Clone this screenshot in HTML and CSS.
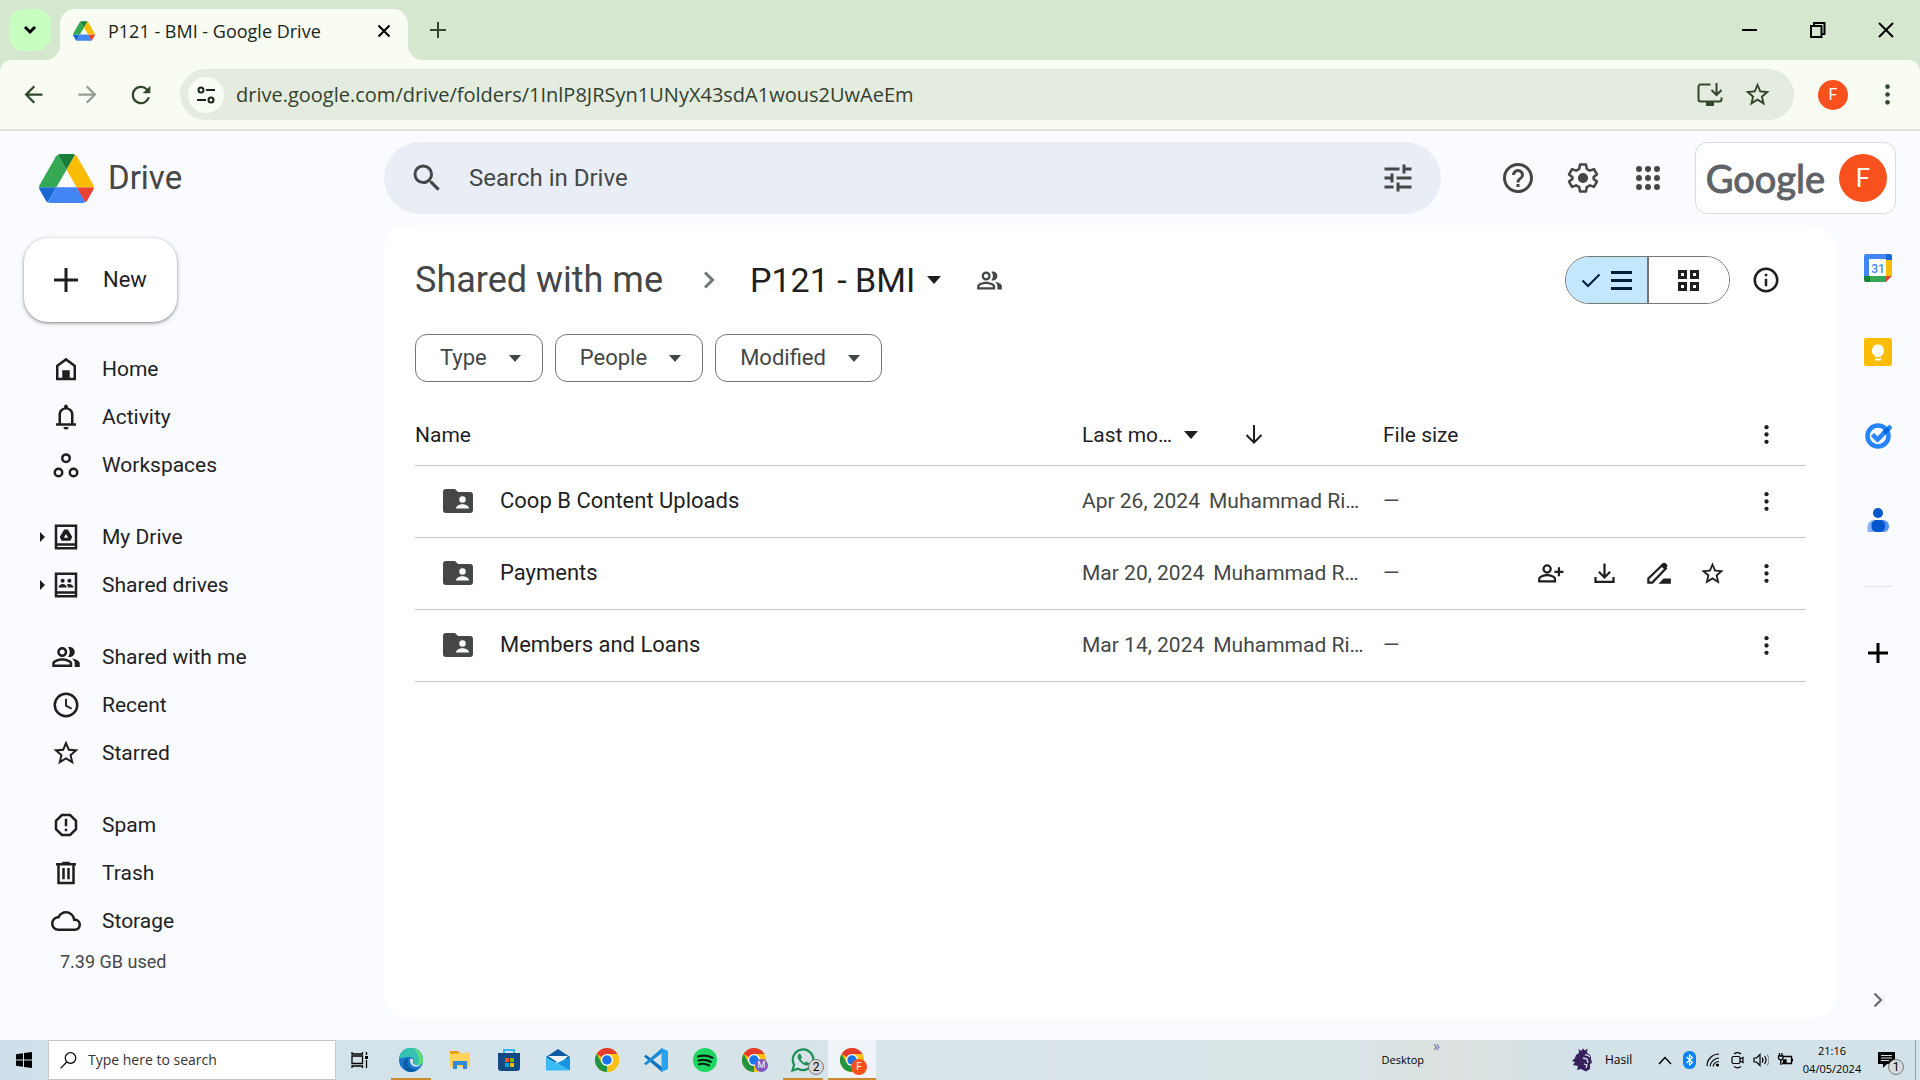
FILE: index.html
```html
<!DOCTYPE html>
<html lang="en">
<head>
<meta charset="utf-8">
<title>P121 - BMI - Google Drive</title>
<link rel="stylesheet" href="styles.css">
</head>
<body>
<svg class="sprite" aria-hidden="true">
  <symbol id="i-drive" viewBox="0 0 87.3 78">
    <path fill="#1967d2" d="m6.6 66.85 3.85 6.65c.8 1.4 1.95 2.5 3.3 3.3l13.75-23.8h-27.5c0 1.55.4 3.1 1.2 4.5z"/>
    <path fill="#34a853" d="m43.65 25-13.75-23.8c-1.35.8-2.5 1.9-3.3 3.3l-25.4 44a9.06 9.06 0 0 0 -1.2 4.5h27.5z"/>
    <path fill="#ea4335" d="m73.55 76.8c1.35-.8 2.5-1.9 3.3-3.3l1.6-2.75 7.65-13.25c.8-1.4 1.2-2.95 1.2-4.5h-27.502l5.852 11.5z"/>
    <path fill="#188038" d="m43.65 25 13.75-23.8c-1.35-.8-2.9-1.2-4.5-1.2h-18.5c-1.6 0-3.15.45-4.5 1.2z"/>
    <path fill="#4285f4" d="m59.8 53h-32.3l-13.75 23.8c1.35.8 2.9 1.2 4.5 1.2h50.8c1.6 0 3.15-.45 4.5-1.2z"/>
    <path fill="#fbbc04" d="m73.4 26.5-12.7-22c-.8-1.4-1.95-2.5-3.3-3.3l-13.75 23.8 16.15 28h27.45c0-1.55-.4-3.1-1.2-4.5z"/>
  </symbol>
  <symbol id="i-kebab" viewBox="0 0 24 24"><circle cx="12" cy="5.5" r="1.9"/><circle cx="12" cy="12" r="1.9"/><circle cx="12" cy="18.5" r="1.9"/></symbol>
  <symbol id="i-star" viewBox="0 0 24 24"><path d="M22 9.24l-7.19-.62L12 2 9.19 8.63 2 9.24l5.46 4.73L5.82 21 12 17.27 18.18 21l-1.63-7.03L22 9.24zM12 15.4l-3.76 2.27 1-4.28-3.32-2.88 4.38-.38L12 6.1l1.71 4.04 4.38.38-3.32 2.88 1 4.28L12 15.4z"/></symbol>
  <symbol id="i-caret" viewBox="0 0 14 8"><path d="M0 0h14L7 8z"/></symbol>
  <symbol id="i-people" viewBox="0 0 24 24"><path d="M16.67 13.13C18.04 14.06 19 15.32 19 17v3h4v-3c0-2.18-3.57-3.47-6.33-3.87zM15 12c2.21 0 4-1.79 4-4s-1.79-4-4-4c-.47 0-.91.1-1.33.24C14.5 5.27 15 6.58 15 8s-.5 2.73-1.33 3.76c.42.14.86.24 1.33.24zM9 12c2.21 0 4-1.79 4-4s-1.79-4-4-4-4 1.79-4 4 1.79 4 4 4zm0-6c1.1 0 2 .9 2 2s-.9 2-2 2-2-.9-2-2 .9-2 2-2zm0 7c-2.67 0-8 1.34-8 4v3h16v-3c0-2.66-5.33-4-8-4zm6 5H3v-.99C3.2 16.29 6.3 15 9 15s5.8 1.29 6 2v1z"/></symbol>
  <symbol id="i-search" viewBox="0 0 24 24"><path d="M15.5 14h-.79l-.28-.27A6.47 6.47 0 0 0 16 9.500 6.500 6.500 0 1 0 9.500 16c1.610 0 3.090-.59 4.230-1.570l.27.28v.79l5 4.990L20.490 19l-4.990-5zm-6 0C7.010 14 5 11.990 5 9.500S7.010 5 9.500 5 14 7.010 14 9.500 11.990 14 9.500 14z"/></symbol>
  <symbol id="i-folder" viewBox="0 0 30 24"><path d="M3 0h9l3 3h12a3 3 0 0 1 3 3v15a3 3 0 0 1-3 3H3a3 3 0 0 1-3-3V3a3 3 0 0 1 3-3z"/><circle cx="19.500" cy="10.500" r="3.200" fill="#fff"/><path fill="#fff" d="M13 19.500c0-2.800 4-4.200 6.500-4.200s6.500 1.400 6.500 4.200z"/></symbol>
  <symbol id="i-chrome" viewBox="0 0 48 48">
    <circle cx="24" cy="24" r="24" fill="#fbc116"/>
    <path fill="#e33b2e" d="M24 24 3.200 12A24 24 0 0 1 44.800 12z"/>
    <path fill="#229342" d="M3.200 12A24 24 0 0 0 24 48l10.400-18L24 24 13.600 30z"/>
    <path fill="#fbc116" d="M24 48a24 24 0 0 0 20.800-36H24z"/>
    <circle cx="24" cy="24" r="12" fill="#fff"/><circle cx="24" cy="24" r="9.500" fill="#1a73e8"/>
  </symbol>
</svg>

<header class="tabstrip">
  <button class="tab-search" aria-label="Search tabs"><svg width="18" height="18" viewBox="0 0 18 18" class="stroke heavy"><path d="M4 6l5 5 5-5"/></svg></button>
  <div class="tab">
    <svg width="22" height="20"><use href="#i-drive"/></svg>
    <span class="tab-title">P121 - BMI - Google Drive</span>
    <button class="plain tab-close" aria-label="Close tab"><svg width="14" height="14" viewBox="0 0 14 14" class="stroke"><path d="M1.500 1.500l11 11M12.500 1.500l-11 11"/></svg></button>
  </div>
  <button class="plain tab-new" aria-label="New tab"><svg width="18" height="18" viewBox="0 0 18 18" class="stroke"><path d="M9 1v16M1 9h16"/></svg></button>
  <div class="window-controls">
    <button class="plain" aria-label="Minimize"><svg width="16" height="16" viewBox="0 0 16 16"><path d="M0 7h15v2H0z"/></svg></button>
    <button class="plain" aria-label="Restore"><svg width="16" height="16" viewBox="0 0 16 16" class="stroke"><path d="M1 4h10.500v11H1zM4 4V1h10.500v11h-3"/></svg></button>
    <button class="plain" aria-label="Close"><svg width="16" height="16" viewBox="0 0 16 16" class="stroke"><path d="M1 1l14 14M15 1L1 15"/></svg></button>
  </div>
</header>

<div class="toolbar-wrap">
<div class="toolbar">
  <div class="nav-buttons">
    <button class="plain" aria-label="Back"><svg width="27" height="27" viewBox="0 0 24 24"><path d="M20 11H7.830l5.590-5.590L12 4l-8 8 8 8 1.410-1.410L7.830 13H20v-2z"/></svg></button>
    <button class="plain faded" aria-label="Forward"><svg width="27" height="27" viewBox="0 0 24 24"><path d="M12 4l-1.410 1.410L16.170 11H4v2h12.170l-5.580 5.590L12 20l8-8z"/></svg></button>
    <button class="plain" aria-label="Reload"><svg width="28" height="28" viewBox="0 0 24 24"><path d="M17.650 6.350A7.960 7.960 0 0 0 12 4a8 8 0 1 0 7.730 10h-2.080A6 6 0 1 1 12 6c1.660 0 3.140.69 4.220 1.780L13.500 10.500H20V4z"/></svg></button>
  </div>
  <div class="omnibox">
    <button class="site-info" aria-label="Site information"><svg width="20" height="20" viewBox="0 0 20 20" class="stroke"><circle cx="5" cy="5" r="2.500"/><path d="M10 5h9M1 15h9"/><circle cx="15" cy="15" r="2.500"/></svg></button>
    <input class="url" type="text" aria-label="Address" value="drive.google.com/drive/folders/1InlP8JRSyn1UNyX43sdA1wous2UwAeEm">
    <button class="plain" aria-label="Install Google Drive"><svg width="27" height="27" viewBox="0 0 27 27" class="stroke"><path d="M14.500 3.500H4.500a2 2 0 0 0-2 2v13a2 2 0 0 0 2 2h19a2 2 0 0 0 2-2v-2M20.500 2v12M15.500 9l5 5 5-5"/><path d="M10 23h8" stroke-width="4"/></svg></button>
    <button class="plain" aria-label="Bookmark this tab"><svg width="29" height="29"><use href="#i-star"/></svg></button>
  </div>
  <button class="avatar avatar-small" aria-label="Profile">F</button>
  <button class="plain" aria-label="Browser menu"><svg width="29" height="29"><use href="#i-kebab"/></svg></button>
</div>
</div>

<div class="app">
  <header class="app-header">
    <a class="brand" href="#"><svg width="55" height="49"><use href="#i-drive"/></svg><span>Drive</span></a>
    <form class="search">
      <svg width="36" height="36"><use href="#i-search"/></svg>
      <input type="search" placeholder="Search in Drive" aria-label="Search in Drive">
      <button type="button" class="plain" aria-label="Advanced search"><svg width="36" height="36" viewBox="0 0 24 24"><path d="M3 17v2h6v-2H3zM3 5v2h10V5H3zm10 16v-2h8v-2h-8v-2h-2v6h2zM7 9v2H3v2h4v2h2V9H7zm14 4v-2H11v2h10zm-6-4h2V7h4V5h-4V3h-2v6z"/></svg></button>
    </form>
    <div class="header-actions">
      <button class="plain" aria-label="Support"><svg width="36" height="36" viewBox="0 0 24 24"><path d="M11 18h2v-2h-2v2zm1-16C6.480 2 2 6.480 2 12s4.480 10 10 10 10-4.480 10-10S17.520 2 12 2zm0 18c-4.410 0-8-3.590-8-8s3.590-8 8-8 8 3.590 8 8-3.590 8-8 8zm0-14a4 4 0 0 0-4 4h2c0-1.100.9-2 2-2s2 .9 2 2c0 2-3 1.750-3 5h2c0-2.250 3-2.500 3-5a4 4 0 0 0-4-4z"/></svg></button>
      <button class="plain" aria-label="Settings"><svg width="36" height="36" viewBox="0 0 24 24"><path fill="none" stroke="currentColor" stroke-width="1.700" stroke-linejoin="round" d="M10 3h4l.5 2.900 2.100 1.200 2.700-1 2 3.500-2.200 1.800v1.200l2.200 1.800-2 3.500-2.700-1-2.100 1.200L14 21h-4l-.5-2.900-2.100-1.200-2.700 1-2-3.500 2.200-1.800v-1.200L2.700 9.600l2-3.500 2.700 1 2.100-1.200z"/><circle cx="12" cy="12" r="3.400"/></svg></button>
      <button class="plain" aria-label="Google apps"><svg width="36" height="36" viewBox="0 0 24 24"><path stroke="currentColor" stroke-width="4" stroke-linecap="round" d="M6 6h0M12 6h0M18 6h0M6 12h0M12 12h0M18 12h0M6 18h0M12 18h0M18 18h0"/></svg></button>
      <div class="account"><span class="wordmark">Google</span><button class="avatar" aria-label="Google Account">F</button></div>
    </div>
  </header>

  <div class="body">
    <nav class="sidebar">
      <button class="new"><svg width="24" height="24" viewBox="0 0 24 24"><path d="M10.500 0h3v10.500H24v3H13.500V24h-3V13.500H0v-3h10.500z"/></svg>New</button>
      <ul>
        <li><a href="#"><svg class="ico" viewBox="0 0 24 24"><path fill-rule="evenodd" d="M4 21V9l8-6 8 6v12zM6 19V10l6-4.500 6 4.500v9h-3v-6H9v6z"/></svg>Home</a></li>
        <li><a href="#"><svg class="ico" viewBox="0 0 24 24"><path fill-rule="evenodd" d="M4 19v-2h2v-7c0-2.800 1.600-5 4.500-5.700V3.500a1.500 1.500 0 0 1 3 0v.8C16.400 5 18 7.200 18 10v7h2v2zM8 17h8v-7a4 4 0 0 0-8 0zM12 22a2 2 0 0 1-2-2h4a2 2 0 0 1-2 2z"/></svg>Activity</a></li>
        <li><a href="#"><svg class="ico stroke" viewBox="0 0 24 24"><circle cx="12" cy="6.500" r="3"/><circle cx="6" cy="18" r="3"/><circle cx="18" cy="18" r="3"/></svg>Workspaces</a></li>
      </ul>
      <ul>
        <li><a href="#" class="expandable"><svg class="twist" width="5" height="10" viewBox="0 0 5 10"><path d="M0 0l5 5-5 5z"/></svg><svg class="ico" viewBox="0 0 24 24"><path fill="none" stroke="currentColor" stroke-width="2" d="M4 3h16v18H4zM4 18h16"/><path fill-rule="evenodd" d="M10.500 6h3l3.500 6-1.500 3h-7L7 12zM12 9.500l-1.700 3h3.400z"/></svg>My Drive</a></li>
        <li><a href="#" class="expandable"><svg class="twist" width="5" height="10" viewBox="0 0 5 10"><path d="M0 0l5 5-5 5z"/></svg><svg class="ico" viewBox="0 0 24 24"><path fill="none" stroke="currentColor" stroke-width="2" d="M4 3h16v18H4zM4 18h16"/><circle cx="9.300" cy="8.500" r="1.600"/><circle cx="14.700" cy="8.500" r="1.600"/><path d="M6 14c0-1.800 1.600-2.800 3.300-2.800s3.300 1 3.300 2.800zM13.500 14c0-1.100-.3-1.900-.9-2.500 2.400-.9 5.400.2 5.400 2.500z"/></svg>Shared drives</a></li>
      </ul>
      <ul>
        <li><a href="#"><svg class="ico"><use href="#i-people"/></svg>Shared with me</a></li>
        <li><a href="#"><svg class="ico stroke" viewBox="0 0 24 24"><circle cx="12" cy="12" r="9"/><path stroke-width="1.500" d="M12 7v5.500l4.500 2.500"/></svg>Recent</a></li>
        <li><a href="#"><svg class="ico"><use href="#i-star"/></svg>Starred</a></li>
      </ul>
      <ul>
        <li><a href="#"><svg class="ico stroke" viewBox="0 0 24 24"><path d="M8.700 4h6.600L20 8.700v6.600L15.300 20H8.700L4 15.300V8.700zM12 7v6M12 15v2"/></svg>Spam</a></li>
        <li><a href="#"><svg class="ico stroke" viewBox="0 0 24 24"><path d="M4 5h16M9 4h6M6 5v15h12V5M10 8v9M14 8v9"/></svg>Trash</a></li>
        <li><a href="#"><svg class="ico" viewBox="0 0 24 24"><path d="M19.350 10.040A7.490 7.490 0 0 0 12 4C9.110 4 6.600 5.640 5.350 8.040A5.994 5.994 0 0 0 0 14c0 3.310 2.690 6 6 6h13c2.760 0 5-2.240 5-5 0-2.640-2.050-4.780-4.650-4.960zM19 18H6c-2.210 0-4-1.790-4-4 0-2.050 1.530-3.760 3.560-3.970l1.070-.11.5-.95A5.469 5.469 0 0 1 12 6c2.620 0 4.880 1.860 5.390 4.430l.3 1.500 1.530.11A2.980 2.980 0 0 1 22 15c0 1.650-1.350 3-3 3z"/></svg>Storage</a></li>
      </ul>
      <a class="quota" href="#">7.39 GB used</a>
    </nav>

    <main class="panel">
      <div class="title-row">
        <div class="crumbs">
          <a href="#">Shared with me</a>
          <svg class="crumb-sep" width="12" height="18" viewBox="0 0 12 18"><path fill="none" stroke="currentColor" stroke-width="3" d="M2 1.500L9.500 9 2 16.500"/></svg>
          <button class="plain crumb-current">P121 - BMI<svg width="14" height="8"><use href="#i-caret"/></svg></button>
          <button class="plain crumb-share" aria-label="Manage access"><svg width="27" height="27"><use href="#i-people"/></svg></button>
        </div>
        <div class="view-toggle">
          <button class="on" aria-label="List layout"><svg width="20" height="15" viewBox="0 0 20 15" class="stroke"><path d="M1.500 7.500L7 13 18.500 1.500"/></svg><svg width="21" height="19" viewBox="0 0 21 19" class="stroke heavy"><path d="M0 1.500h21M0 9.500h21M0 17.500h21"/></svg></button>
          <button aria-label="Grid layout"><svg width="21" height="21" viewBox="0 0 21 21" class="stroke heavy"><path d="M1.500 1.500h6v6h-6zM13.500 1.500h6v6h-6zM1.500 13.500h6v6h-6zM13.500 13.500h6v6h-6z"/></svg></button>
        </div>
        <button class="plain info" aria-label="View details"><svg width="30" height="30" viewBox="0 0 24 24"><path d="M11 7h2v2h-2zm0 4h2v6h-2zm1-9a10 10 0 1 0 0 20 10 10 0 0 0 0-20zm0 18a8 8 0 1 1 0-16 8 8 0 0 1 0 16z"/></svg></button>
      </div>
      <div class="chips">
        <button>Type<svg width="12" height="7"><use href="#i-caret"/></svg></button>
        <button>People<svg width="12" height="7"><use href="#i-caret"/></svg></button>
        <button>Modified<svg width="12" height="7"><use href="#i-caret"/></svg></button>
      </div>
      <table class="files">
        <colgroup><col><col class="c-mod"><col class="c-size"><col class="c-act"></colgroup>
        <thead>
          <tr>
            <th scope="col">Name</th>
            <th scope="col"><div class="sort"><button class="plain">Last mo…<svg width="14" height="8"><use href="#i-caret"/></svg></button><button class="plain" aria-label="Reverse sort direction"><svg width="20" height="20" viewBox="0 0 20 20" class="stroke"><path d="M10 0v17M2.500 10l7.500 7.500 7.500-7.500"/></svg></button></div></th>
            <th scope="col">File size</th>
            <th scope="col"><div class="actions"><button class="plain" aria-label="More options"><svg width="27" height="27"><use href="#i-kebab"/></svg></button></div></th>
          </tr>
        </thead>
        <tbody>
          <tr>
            <td><a class="file" href="#"><svg width="30" height="24"><use href="#i-folder"/></svg>Coop B Content Uploads</a></td>
            <td><div class="modified"><span>Apr 26, 2024</span><span>Muhammad Ri…</span></div></td>
            <td>—</td>
            <td><div class="actions"><button class="plain" aria-label="More actions"><svg width="27" height="27"><use href="#i-kebab"/></svg></button></div></td>
          </tr>
          <tr>
            <td><a class="file" href="#"><svg width="30" height="24"><use href="#i-folder"/></svg>Payments</a></td>
            <td><div class="modified"><span>Mar 20, 2024</span><span>Muhammad R…</span></div></td>
            <td>—</td>
            <td><div class="actions">
              <button class="plain" aria-label="Share"><svg width="27" height="27" viewBox="0 0 24 24" class="stroke"><circle cx="9" cy="8" r="3.200"/><path d="M2 19v-2.500c0-1.500 4-3 7-3s7 1.500 7 3V19zM19.500 6.500v8M15.500 10.500h8"/></svg></button>
              <button class="plain" aria-label="Download"><svg width="27" height="27" viewBox="0 0 24 24" class="stroke"><path d="M12 3v12M7 10.500l5 5 5-5M4 15v4.500h16V15"/></svg></button>
              <button class="plain" aria-label="Rename"><svg width="27" height="27" viewBox="0 0 24 24"><path fill="none" stroke="currentColor" stroke-width="2" d="M3 20v-3.500L15.500 4.500l3 3L6.500 20z"/><path d="M13.500 5l2-2c1-1 2.200-.8 3.200.2s1.800 2.200.8 3.200L17.500 8.500zM12 21l4.500-4.500H23V21z"/></svg></button>
              <button class="plain" aria-label="Add to starred"><svg width="27" height="27"><use href="#i-star"/></svg></button>
              <button class="plain" aria-label="More actions"><svg width="27" height="27"><use href="#i-kebab"/></svg></button>
            </div></td>
          </tr>
          <tr>
            <td><a class="file" href="#"><svg width="30" height="24"><use href="#i-folder"/></svg>Members and Loans</a></td>
            <td><div class="modified"><span>Mar 14, 2024</span><span>Muhammad Ri…</span></div></td>
            <td>—</td>
            <td><div class="actions"><button class="plain" aria-label="More actions"><svg width="27" height="27"><use href="#i-kebab"/></svg></button></div></td>
          </tr>
        </tbody>
      </table>
    </main>

    <aside class="rail">
      <button class="plain" aria-label="Calendar"><svg width="28" height="28" viewBox="0 0 28 28"><path fill="#4285f4" d="M2 0h20v5H5v18H0V2a2 2 0 0 1 2-2z"/><path fill="#1967d2" d="M22 0h4a2 2 0 0 1 2 2v4h-6z"/><path fill="#fbbc04" d="M22 6h6v16h-6z"/><path fill="#34a853" d="M5 22h17v6H5z"/><path fill="#188038" d="M0 22h6v6H2a2 2 0 0 1-2-2z"/><path fill="#ea4335" d="M22 22h6l-6 6z"/><path fill="#fff" d="M6 6h16v16H6z"/><text x="14" y="19" text-anchor="middle" font-size="12" font-weight="500" fill="#4285f4">31</text></svg></button>
      <button class="plain" aria-label="Keep"><svg width="28" height="28" viewBox="0 0 28 28"><rect width="28" height="28" rx="2" fill="#fbbc04"/><path fill="#fff" d="M14 6.500a6 6 0 0 0-3 11.200V19h6v-1.300a6 6 0 0 0-3-11.200zM11 20.500h6v2h-6z"/></svg></button>
      <button class="plain" aria-label="Tasks"><svg width="28" height="28" viewBox="0 0 28 28"><circle cx="14" cy="14" r="10.500" fill="none" stroke="#2684fc" stroke-width="4.500"/><path fill="none" stroke="#2684fc" stroke-width="4.500" d="M8.500 12.500l5 5L27 4"/><path fill="none" stroke="#0066da" stroke-width="4.500" d="M20 11l4.500-4.500"/></svg></button>
      <button class="plain" aria-label="Contacts"><svg width="28" height="28" viewBox="0 0 28 28"><circle cx="14" cy="7" r="5" fill="#0057cc"/><path fill="#8ab0ff" d="M3.500 26v-5c0-4 3-7 7-7H14v12z"/><path fill="#5491f5" d="M14 14h5a6 6 0 0 1 6 6c0 3.500-2 6-5 6h-6z"/><rect x="7.500" y="14" width="13.500" height="12" rx="5" fill="#0057cc"/></svg></button>
      <hr>
      <button class="plain rail-add" aria-label="Get add-ons"><svg width="20" height="20" viewBox="0 0 20 20"><path d="M8.500 0h3v8.500H20v3h-8.500V20h-3v-8.500H0v-3h8.500z"/></svg></button>
      <button class="plain rail-hide" aria-label="Hide side panel"><svg width="10" height="16" viewBox="0 0 10 16" class="stroke"><path d="M1.500 1.500L8 8l-6.500 6.500"/></svg></button>
    </aside>
  </div>
</div>

<footer class="taskbar">
  <button class="plain task" aria-label="Start"><svg width="16" height="16" viewBox="0 0 16 16"><path d="M0 2.200L7 1.200v6.400H0zM8 1l8-1v7.600H8zM0 8.400h7v6.400l-7-1zM8 8.400h8V16l-8-1.100z"/></svg></button>
  <div class="task-search"><svg class="outline" width="17" height="17" viewBox="0 0 17 17" stroke="currentColor" stroke-width="1.200"><circle cx="10.500" cy="6" r="5.300"/><path d="M6.800 10L.5 16.300"/></svg><input type="text" aria-label="Type here to search" placeholder="Type here to search"></div>
  <button class="plain task" aria-label="Task view"><svg class="outline" width="18" height="18" viewBox="0 0 18 18" stroke="currentColor" stroke-width="1.300"><path d="M1 5h10.500v7.500H1zM1 1v2h10.500V1M1 17v-2h10.500v2M15.500 1v3M15.500 9v8"/><path d="M14 5h3v3h-3z" fill="currentColor" stroke="none"/></svg></button>
  <div class="apps">
    <button class="plain task running" aria-label="Microsoft Edge"><svg width="24" height="24" viewBox="0 0 24 24"><circle cx="12" cy="12" r="12" fill="#1577cf"/><path fill="#35c1b1" d="M0 11A12 12 0 0 1 24 12c0 3-2 5-5.500 5-2.500 0-4-1-3.500-2.500.8-3-1.500-5.500-5-5.500S1 10 0 11z"/><path fill="#66db6e" d="M14 .2A12 12 0 0 1 24 12c0 3-2 5-5.500 5 2-3 3-11-4.500-16.800z"/><path fill="#0c59a4" d="M9.500 10c-3 5 0 12 9 11.500A12 12 0 0 1 12 24C6 24 3 18 5 13c1-2 3-3 4.500-3z"/><path fill="#d5e4ea" d="M11 11c3-1 4 1.500 3 4 1 2 5 3 8 1.500-5 5-12 1-11-5.500z"/></svg></button>
    <button class="plain task" aria-label="File Explorer"><svg width="22" height="20" viewBox="0 0 22 20"><path fill="#e0a10b" d="M1 1h8l2 2v3H1z"/><path fill="#ffd35c" d="M1 4l20-1.500V17H1z"/><path fill="#2f8ad8" d="M4 11h14v8h-4v-4H8v4H4z"/></svg></button>
    <button class="plain task" aria-label="Microsoft Store"><svg width="24" height="24" viewBox="0 0 24 24"><path fill="none" stroke="#37b5ee" stroke-width="2" d="M7 6V2h10v4"/><path fill="#144a84" d="M1 5h22v15a3 3 0 0 1-3 3H4a3 3 0 0 1-3-3z"/><path fill="#f25022" d="M8 10h4v4H8z"/><path fill="#7fba00" d="M13 10h4v4h-4z"/><path fill="#00a4ef" d="M8 15h4v4H8z"/><path fill="#ffb900" d="M13 15h4v4h-4z"/></svg></button>
    <button class="plain task" aria-label="Mail"><svg width="24" height="24" viewBox="0 0 24 24"><path fill="#0f5ba5" d="M0 9l12-8 12 8v5H0z"/><path fill="#eef6fb" d="M2 8h20l-8 8z"/><path fill="#39baf2" d="M0 9l24 13.500H0z"/><path fill="#1a94e0" d="M24 9v13.500L11 15z"/></svg></button>
    <button class="plain task" aria-label="Google Chrome"><svg width="24" height="24"><use href="#i-chrome"/></svg></button>
    <button class="plain task" aria-label="Visual Studio Code"><svg width="24" height="24" viewBox="0 0 24 24"><path fill="#1070b3" d="M0 8.500l2-1.700L18 19v5z"/><path fill="#1c8ad6" d="M0 15.500l2 1.700L18 5V0z"/><path fill="#2aa3ee" d="M17.500 0L24 3v18l-6.500 3z"/></svg></button>
    <button class="plain task" aria-label="Spotify"><svg width="24" height="24" viewBox="0 0 24 24"><circle cx="12" cy="12" r="12" fill="#1ed760"/><path fill="none" stroke="#06210f" stroke-width="2.200" stroke-linecap="round" d="M5 8.500c5-1.500 10-1 14.500 1.300M5.500 12.500c4.500-1.200 8.500-.7 12.300 1.300M6 16.200c3.700-.9 7-.5 10 1.200"/></svg></button>
    <button class="plain task" aria-label="Google Chrome, profile M"><svg width="24" height="24"><use href="#i-chrome"/></svg><span class="badge purple">M</span></button>
    <button class="plain task running" aria-label="WhatsApp"><svg width="24" height="24" viewBox="0 0 24 24"><path fill="none" stroke="#1f8f58" stroke-width="2.200" d="M1.500 22.500l1.600-5.700a10.300 10.300 0 1 1 4 4z"/><path fill="#1f8f58" d="M8 6c-2 1-2 4 1 7.500s6.500 5 8.500 3.500c1-1 .8-1.800 0-2.200L15 13.500l-1.500 1.300c-1.800-.7-3-2-3.800-3.800L11 9.500 9.700 6.400C9.300 5.800 8.600 5.700 8 6z"/></svg><span class="badge count">2</span></button>
    <button class="plain task running active" aria-label="Google Chrome, profile F"><svg width="24" height="24"><use href="#i-chrome"/></svg><span class="badge orange">F</span></button>
  </div>
  <div class="desk"><span>Desktop</span><span class="more">»</span></div>
  <button class="plain news"><svg width="24" height="24" viewBox="0 0 24 24"><path fill="#38205c" d="M7 5l-.5-4 2.500 2L11 .5l2 2 2.500-2L15 5c3 1 4.500 3 4 6l1 4-2 1v5l-4 2.500L9 21l-4 1 1-4-5-1 2-3-3-1 3-3 1-3z"/><path fill="none" stroke="#d7e2ea" stroke-width="1.300" d="M13 7c3-.5 4 1 5 2M11 10l4 1 1 4M12 16l3 1-1 3"/></svg>Hasil</button>
  <div class="tray">
    <button class="plain" aria-label="Show hidden icons"><svg class="outline" width="14" height="9" viewBox="0 0 14 9" stroke="currentColor" stroke-width="1.500"><path d="M1 8l6-6.500L13 8"/></svg></button>
    <button class="plain" aria-label="Bluetooth"><svg width="13" height="18" viewBox="0 0 13 18"><rect width="13" height="18" rx="6" fill="#0a84f0"/><path fill="none" stroke="#fff" stroke-width="1.200" d="M3.500 6l6 5.500L6.500 14V4l3 2.500-6 5.500"/></svg></button>
    <button class="plain" aria-label="Wi-Fi"><svg class="outline" width="14" height="14" viewBox="0 0 14 14" stroke="currentColor" stroke-width="1.200"><path d="M1 13A12 12 0 0 1 13 1M4 13.500A9.500 9.500 0 0 1 13 5M7 13.500A6.500 6.500 0 0 1 13 8.500"/><circle cx="11.500" cy="12" r="1" fill="currentColor"/></svg></button>
    <button class="plain" aria-label="Meet now"><svg class="outline" width="13" height="18" viewBox="0 0 13 18" stroke="currentColor" stroke-width="1.200"><rect x="1" y="5.500" width="8" height="7" rx="1.500"/><path d="M9 8l3-1.500v5L9 10M3 3c2-1.500 5-1.500 7 0M3 15.500c2 1.500 5 1.500 7 0"/></svg></button>
    <button class="plain" aria-label="Volume"><svg class="outline" width="16" height="14" viewBox="0 0 16 14" stroke="currentColor" stroke-width="1.200"><path d="M1 5h2.500L7 1.500v11L3.500 9H1zM9 4.500a4 4 0 0 1 0 5M11.500 3a6.500 6.500 0 0 1 0 8"/><path d="M14 1.500a9 9 0 0 1 0 11" opacity=".4"/></svg></button>
    <button class="plain" aria-label="Battery"><svg class="outline" width="16" height="14" viewBox="0 0 16 14" stroke="currentColor" stroke-width="1.300"><path d="M6 3.500h8.500v7H5M15.500 5.500v3M2.500 0v3M5 0v3M1.500 3H6v2.500L3.800 7.500 1.500 5.500zM3.800 7.500V12"/><path d="M6.500 7H9v2.500H6.500z" fill="currentColor"/></svg></button>
  </div>
  <button class="plain clock"><span>21:16</span><span>04/05/2024</span></button>
  <button class="plain task notify" aria-label="Notifications"><svg width="17" height="16" viewBox="0 0 17 16"><path d="M0 0h17v12H9l-4 4v-4H0z"/><path stroke="#d3e2ea" stroke-width="1.200" d="M3 3.500h11M3 6h11M3 8.500h8"/></svg><span class="badge count low">1</span></button>
  <div class="show-desktop"></div>
</footer>
</body>
</html>
```
FILE: styles.css
```css
* { box-sizing: border-box; }

body {
  margin: 0;
  min-height: 100vh;
  display: flex;
  flex-direction: column;
  font-family: Roboto, "Liberation Sans", sans-serif;
  font-size: 21px;
  line-height: 24px;
  color: #1f1f1f;
  background: #f9fbff;
}

svg { display: block; flex: none; fill: currentColor; }
.sprite { position: absolute; width: 0; height: 0; }
.outline { fill: none; }
.stroke { fill: none; stroke: currentColor; stroke-width: 2; }
.heavy { stroke-width: 3; }

a { color: inherit; text-decoration: none; }
button, input { font: inherit; color: inherit; }
button { cursor: pointer; }
input { border: 0; outline: 0; background: none; min-width: 0; padding: 0; }
.plain {
  display: flex;
  align-items: center;
  justify-content: center;
  border: 0;
  background: none;
  padding: 0;
}

/* Browser tab strip */
.tabstrip {
  height: 60px;
  display: flex;
  align-items: flex-end;
  padding-left: 9px;
  background: #d5e7cf;
  font-family: "Open Sans", sans-serif;
  color: #000;
}
.tab-search {
  width: 42px;
  height: 42px;
  margin: 0 9px 9px 0;
  padding: 0 12px;
  border: 0;
  border-radius: 15px;
  background: #c7ffc0;
}
.tab {
  position: relative;
  width: 348px;
  height: 51px;
  padding: 0 17px 8px 13px;
  display: flex;
  align-items: center;
  gap: 13px;
  border-radius: 15px 15px 0 0;
  background: #f8fcf2;
  font-size: 18px;
  color: #1a2419;
}
.tab::before,
.tab::after {
  content: "";
  position: absolute;
  bottom: 0;
  width: 15px;
  height: 15px;
}
.tab::before { right: 100%; background: radial-gradient(circle at 0 0, #d5e7cf 15px, #f8fcf2 15px); }
.tab::after { left: 100%; background: radial-gradient(circle at 100% 0, #d5e7cf 15px, #f8fcf2 15px); }
.tab-title { flex: 1; white-space: nowrap; }
.tab-close { color: #000; }
.tab-new { width: 60px; height: 60px; color: #33472f; }
.window-controls { margin-left: auto; display: flex; }
.window-controls button { width: 68px; height: 60px; }

/* Browser toolbar */
.toolbar-wrap { background: #d5e7cf; }
.toolbar {
  height: 71px;
  display: flex;
  align-items: center;
  padding-right: 18px;
  border-radius: 12px 12px 0 0;
  border-bottom: 2px solid #dde2d6;
  background: #f8fcf2;
  font-family: "Open Sans", sans-serif;
  color: #33472f;
}
.nav-buttons { display: flex; padding: 0 12px 0 6px; }
.nav-buttons button { width: 54px; height: 54px; }
.faded { opacity: .5; }
.omnibox {
  flex: 1;
  height: 51px;
  display: flex;
  align-items: center;
  gap: 20px;
  padding: 0 22px 0 8px;
  border-radius: 26px;
  background: #e3ecdf;
}
.site-info {
  width: 36px;
  height: 36px;
  padding: 0 8px;
  border: 0;
  border-radius: 50%;
  background: #f8fcf2;
  color: #1a2419;
}
.url { flex: 1; margin-left: -8px; font-size: 20px; color: #33402f; }
.avatar {
  width: 48px;
  height: 48px;
  border: 0;
  border-radius: 50%;
  padding: 0;
  background: #f8511d;
  color: #fff;
  font-family: Roboto, sans-serif;
  font-size: 26px;
}
.avatar-small { width: 30px; height: 30px; margin: 0 25px 0 24px; font-size: 16px; }

/* Drive application */
.app { flex: 1; display: flex; flex-direction: column; }
.app-header {
  display: flex;
  align-items: center;
  padding: 11px 24px 12px 0;
  color: #444746;
}
.brand {
  width: 384px;
  display: flex;
  align-items: center;
  gap: 14px;
  padding-left: 39px;
  font-size: 33px;
}
.search {
  flex: 1;
  height: 72px;
  display: flex;
  align-items: center;
  gap: 24px;
  padding: 0 25px;
  border-radius: 36px;
  background: #e9eef6;
}
.search input { flex: 1; font-size: 24px; }
.search input::placeholder { color: #444746; opacity: 1; }
.header-actions { display: flex; align-items: center; gap: 17px; padding-left: 53px; }
.header-actions > button { width: 48px; height: 48px; }
.account {
  height: 72px;
  margin-left: 6px;
  display: flex;
  align-items: center;
  gap: 14px;
  padding: 0 8px 0 10px;
  border: 1px solid #dadce0;
  border-radius: 12px;
  background: #fff;
}
.wordmark {
  font-family: Lato, sans-serif;
  font-size: 38px;
  line-height: 48px;
  color: #5f6368;
  -webkit-text-stroke: 1px #5f6368;
}

.body { flex: 1; display: flex; }

.sidebar { width: 384px; padding: 12px 0 0 24px; }
.new {
  height: 84px;
  display: flex;
  align-items: center;
  gap: 25px;
  padding: 0 30px;
  margin-bottom: 23px;
  border: 0;
  border-radius: 24px;
  background: #fff;
  font-size: 22px;
  box-shadow: 0 1px 3px rgba(0, 0, 0, .4), 0 2px 6px rgba(0, 0, 0, .12);
}
.sidebar ul { list-style: none; margin: 0 0 24px; padding: 0; }
.sidebar li a { height: 48px; display: flex; align-items: center; gap: 21px; padding-left: 27px; }
.ico { width: 30px; height: 30px; }
.sidebar li .expandable { padding-left: 16px; }
.twist { margin-right: -15px; }
.sidebar ul:last-of-type { margin-bottom: 5px; }
.quota { display: block; padding-left: 36px; font-size: 18px; color: #444746; }

.panel {
  flex: 1;
  margin-bottom: 22px;
  padding: 30px 30px 0 31px;
  border-radius: 24px;
  background: #fff;
}
.title-row { display: flex; align-items: center; }
.crumbs {
  flex: 1;
  display: flex;
  align-items: center;
  font-size: 36px;
  line-height: 48px;
  color: #444746;
}
.crumb-sep { margin: 0 35px 0 40px; color: #747775; }
.crumb-current { gap: 12px; font-size: 34px; color: #1f1f1f; }
.crumb-share { margin-left: 35px; }
.view-toggle {
  width: 165px;
  height: 48px;
  display: flex;
  border: 1px solid #747775;
  border-radius: 24px;
  overflow: hidden;
}
.view-toggle button {
  flex: 1;
  display: flex;
  align-items: center;
  justify-content: center;
  gap: 10px;
  border: 0;
  padding: 0;
  background: #fff;
}
.view-toggle .on { border-right: 2px solid #747775; background: #c2e7ff; color: #001d35; }
.info { width: 48px; height: 48px; margin: 0 16px 0 12px; }

.chips { display: flex; gap: 12px; margin: 30px 0 23px; }
.chips button {
  height: 48px;
  display: flex;
  align-items: center;
  gap: 22px;
  padding: 0 21px 0 24px;
  border: 1px solid #747775;
  border-radius: 12px;
  background: #fff;
  font-size: 22px;
  color: #444746;
}

.files { width: 100%; table-layout: fixed; border-collapse: collapse; }
.c-mod { width: 301px; }
.c-size { width: 140px; }
.c-act { width: 283px; }
.files th, .files td { padding: 0; border-bottom: 1px solid #c4c7c5; text-align: left; }
.files th { height: 60px; font-weight: 400; }
.files td { height: 72px; color: #444746; }
.sort { display: flex; gap: 46px; }
.sort .plain { gap: 12px; }
.file { display: flex; align-items: center; gap: 27px; padding-left: 28px; font-size: 22px; color: #1f1f1f; }
.file svg { color: #444746; }
.modified { display: flex; gap: 9px; white-space: nowrap; }
.actions { display: flex; justify-content: flex-end; gap: 27px; padding-right: 26px; color: #1f1f1f; }

.rail {
  width: 84px;
  display: flex;
  flex-direction: column;
  align-items: center;
  padding: 28px 0 26px;
}
.rail > button { height: 28px; margin-bottom: 56px; }
.rail hr { width: 30px; margin: -4px 0 52px; border: 0; border-top: 1px solid #e0e2e6; }
.rail-add { color: #000; }
.rail .rail-hide { margin: auto 0 0; padding: 6px; color: #5f6368; }

/* Windows taskbar */
.taskbar {
  height: 40px;
  display: flex;
  background: linear-gradient(90deg, #cfe0ea, #d5e4ea 30%, #d9e4e6 70%, #dbe1df 76%, #d3e1e8 82%, #d3e1e8);
  font-family: "Open Sans", sans-serif;
  font-size: 12px;
  line-height: 18px;
  color: #000;
}
.task { position: relative; width: 48px; height: 40px; }
.task-search {
  width: 288px;
  display: flex;
  align-items: center;
  gap: 11px;
  padding-left: 11px;
  border: 1px solid #c6c8c9;
  background: #fff;
  font-size: 14px;
}
.task-search input { flex: 1; }
.task-search input::placeholder { color: #333; opacity: 1; }
.apps { display: flex; gap: 1px; padding-left: 3px; }
.running::after {
  content: "";
  position: absolute;
  left: 4px;
  right: 4px;
  bottom: 0;
  height: 2px;
  background: #cc8a2c;
}
.active { background: #eef4f8; }
.active::after { left: 0; right: 0; }
.badge {
  position: absolute;
  right: 3px;
  bottom: 5px;
  width: 16px;
  height: 16px;
  border-radius: 50%;
  color: #fff;
  font-family: Roboto, sans-serif;
  font-size: 10px;
  line-height: 16px;
  text-align: center;
}
.purple { right: 10px; width: 13px; height: 13px; line-height: 13px; font-size: 9px; bottom: 8px; background: #7e57c2; }
.orange { right: 9px; background: #f8511d; }
.count { border: 1px solid #777; background: #d9dcdd; color: #000; font-size: 12px; line-height: 14px; }
.low { right: 11px; }
.desk { display: flex; align-items: center; gap: 9px; margin-left: auto; font-size: 11px; }
.more { align-self: flex-start; line-height: 10px; padding-top: 1px; font-size: 14px; color: #6a6fa8; }
.news { gap: 9px; width: 81px; justify-content: flex-start; margin-left: 132px; }
.tray { display: flex; }
.tray button { width: 24px; }
.clock { width: 70px; flex-direction: column; font-size: 11px; }
.notify { padding-right: 10px; }
.show-desktop { width: 5px; border-left: 1px solid #8fa0a8; }
```
